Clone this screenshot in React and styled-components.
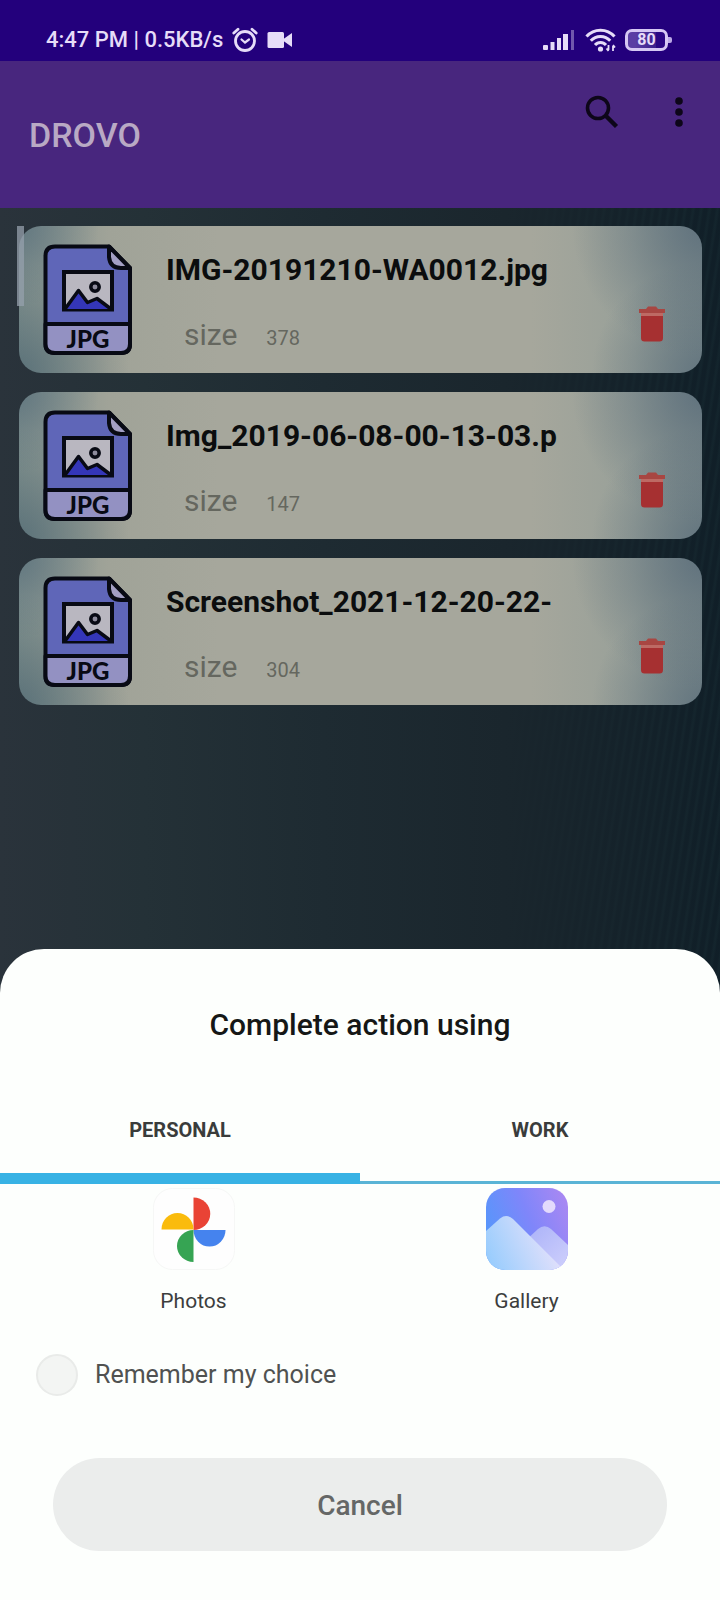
import React, { useState } from "react";
import styled, { createGlobalStyle } from "styled-components";

const GlobalStyle = createGlobalStyle`
  *, *::before, *::after { box-sizing: border-box; }
  body { margin: 0; font-family: Roboto, "Liberation Sans", sans-serif; }
  button { margin: 0; padding: 0; border: 0; background: none; font-family: inherit; cursor: pointer; }
`;

const Screen = styled.div`
  min-height: 100vh;
  display: flex;
  flex-direction: column;
  background:
    linear-gradient(90deg, #2a333b 0%, #243137 20%, #1e2b32 45%, #1a262d 70%, rgba(19, 34, 43, 0.6) 100%),
    repeating-linear-gradient(99deg, #0c1a23 0 3px, #14282f 5px 6px, #0c1a23 8px);
`;

const StatusBar = styled.div`
  display: flex;
  justify-content: space-between;
  align-items: center;
  height: 61px;
  padding: 19px 52px 0 46px;
  background: #23007c;
  color: #e6dcf8;
`;

const StatusGroup = styled.div`
  display: flex;
  align-items: center;
  gap: 9px;
`;

const Clock = styled.span`
  font-size: 22px;
  font-weight: 500;
  line-height: 28px;
  white-space: pre;
`;

const Battery = styled.span`
  position: relative;
  display: flex;
  align-items: center;
  justify-content: center;
  width: 43px;
  height: 22px;
  border: 3px solid #d6c8f4;
  border-radius: 7px;
  background: linear-gradient(90deg, #5a3ea4 20%, #3b1f8c 75%, #2a0784 75%);
  font-size: 16px;
  font-weight: 700;
  line-height: 16px;

  &::after {
    content: "";
    position: absolute;
    right: -7px;
    top: 5px;
    width: 4px;
    height: 6px;
    border-radius: 0 2px 2px 0;
    background: #bba9e6;
  }
`;

const AppBar = styled.header`
  display: flex;
  align-items: center;
  justify-content: space-between;
  height: 147px;
  padding: 0 29px;
  background: #48267e;
`;

const AppTitle = styled.h1`
  margin: 0;
  color: #b9a9c4;
  font-size: 34px;
  font-weight: 500;
  line-height: 40px;
`;

const Actions = styled.div`
  display: flex;
  align-items: center;
  align-self: flex-start;
  gap: 48px;
  height: 102px;
`;

const IconButton = styled.button`
  display: flex;
  color: ${(p) => p.$color};
`;

const FileList = styled.ul`
  position: relative;
  flex: 1;
  display: flex;
  flex-direction: column;
  gap: 19px;
  margin: 0;
  padding: 18px 18px 60px 19px;
  list-style: none;
`;

const ScrollThumb = styled.li`
  position: absolute;
  left: 17px;
  top: 18px;
  width: 7px;
  height: 80px;
  background: rgba(150, 160, 172, 0.75);
`;

const Card = styled.li`
  display: flex;
  height: 147px;
  padding: 18px 37px 0 24px;
  border-radius: 22px;
  background:
    radial-gradient(circle at 0% 0%, rgba(84, 108, 122, 0.7), transparent 80px),
    radial-gradient(circle at 0% 100%, rgba(74, 100, 112, 0.7), transparent 110px),
    radial-gradient(circle at 100% 0%, rgba(84, 104, 120, 0.75), transparent 130px),
    radial-gradient(circle at 100% 100%, rgba(88, 108, 122, 0.75), transparent 110px),
    linear-gradient(90deg, #84938f 0, #a0a398 90px, #a6a79c 200px, #a6a79c 75%, #98a099 90%, #86928f 100%);
`;

const FileInfo = styled.div`
  flex: 1;
  min-width: 0;
  display: flex;
  flex-direction: column;
  gap: 25px;
  padding: 6px 0 0 33px;
`;

const FileName = styled.span`
  overflow: hidden;
  color: #0b0d0e;
  font-size: 30px;
  font-weight: 700;
  line-height: 40px;
  white-space: nowrap;
`;

const SizeRow = styled.div`
  display: flex;
  align-items: baseline;
  gap: 29px;
  padding-left: 18px;
  color: #65675f;
  line-height: 40px;
`;

const SizeLabel = styled.span`
  font-size: 30px;
`;

const SizeValue = styled.span`
  font-size: 20px;
`;

const DeleteButton = styled(IconButton)`
  align-self: flex-end;
  margin-bottom: 31px;
`;

const Sheet = styled.section`
  display: flex;
  flex-direction: column;
  padding: 56px 0 49px;
  border-radius: 44px 44px 0 0;
  background: #fdfffd;
`;

const SheetTitle = styled.h2`
  margin: 0 0 31px;
  color: #151716;
  font-size: 30px;
  font-weight: 500;
  line-height: 40px;
  text-align: center;
`;

const Tabs = styled.div`
  display: flex;
`;

const Tab = styled.button`
  flex: 1;
  height: 108px;
  color: #3a3c3b;
  font-size: 20px;
  font-weight: 700;
  line-height: 28px;
  box-shadow: inset 0 ${(p) => (p.$active ? "-11px #38b2e4" : "-3px #5ab4d6")};
`;

const AppGrid = styled.div`
  display: grid;
  grid-template-columns: 1fr 1fr;
  padding: 4px 27px 0;
`;

const AppChoice = styled.button`
  display: flex;
  flex-direction: column;
  align-items: center;
  gap: 17px;
  color: #3c3e3d;
  font-size: 21px;
  line-height: 28px;
`;

const Remember = styled.label`
  display: flex;
  align-items: center;
  gap: 17px;
  margin: 39px 36px 0;
  color: #505251;
  font-size: 25px;
  line-height: 40px;
`;

const RoundCheck = styled.input`
  appearance: none;
  width: 42px;
  height: 42px;
  margin: 0;
  border: 2px solid #e9ebe9;
  border-radius: 50%;
  background: #f3f5f3;

  &:checked { background: #38b2e4; }
`;

const CancelButton = styled.button`
  height: 93px;
  margin: 62px 53px 0;
  padding-top: 3px;
  border-radius: 47px;
  background: #ebedec;
  color: #656766;
  font-size: 28px;
  font-weight: 500;
  line-height: 40px;
`;

const AlarmIcon = () => (
  <svg width="26" height="26" viewBox="0 0 26 26" fill="none" stroke="currentColor" strokeWidth="2.8" strokeLinecap="round">
    <circle cx="13" cy="14" r="9.5" />
    <path d="M1.8 6 6 2.2M24.2 6 20 2.2" />
    <path d="M9.5 12.5 13 15.5 17 12.5" strokeWidth="2.2" />
  </svg>
);

const VideoIcon = () => (
  <svg width="26" height="18" viewBox="0 0 26 18" fill="currentColor">
    <rect x="0.5" y="1" width="16.5" height="16" rx="1.5" />
    <path d="M15 9 25 2v14z" />
  </svg>
);

const SignalIcon = () => (
  <svg width="33" height="22" viewBox="0 0 33 22" fill="currentColor">
    <rect x="0" y="16" width="5" height="5" rx="1" />
    <rect x="7.5" y="13" width="4" height="8" />
    <rect x="14" y="9" width="4" height="12" />
    <rect x="20" y="5" width="5" height="16" />
    <rect x="28" y="1" width="3" height="20" opacity="0.4" />
  </svg>
);

const WifiIcon = () => (
  <svg width="31" height="26" viewBox="0 0 31 26" fill="none" stroke="currentColor" strokeWidth="3">
    <path d="M1.5 9.5C9 1 22 1 29.5 9.5" />
    <path d="M5.8 13.8C11 8 20 8 25.2 13.8" />
    <path d="M10 18C13 14.5 18 14.5 21 18" />
    <circle cx="15.5" cy="22" r="2.6" fill="currentColor" stroke="none" />
    <path d="M23.5 18v5M21.5 21.5l2 2.5M28 24v-5M30 20.5l-2-2.5" strokeWidth="1.8" />
  </svg>
);

const SearchIcon = () => (
  <svg width="34" height="34" viewBox="0 0 34 34" fill="none" stroke="currentColor" strokeWidth="3.6">
    <circle cx="13" cy="13" r="10.5" />
    <path d="M20.5 20.5 31.5 31.5" strokeWidth="4.4" />
  </svg>
);

const MoreIcon = () => (
  <svg width="24" height="34" viewBox="0 0 24 34" fill="currentColor">
    <circle cx="12" cy="6" r="3.8" />
    <circle cx="12" cy="17" r="3.8" />
    <circle cx="12" cy="28" r="3.8" />
  </svg>
);

const TrashIcon = () => (
  <svg width="26" height="36" viewBox="0 0 26 36">
    <path d="M0 3H7L9 0.5H17L19 3H26V7H0Z" fill="#a84642" />
    <path d="M2 7H24V10H2Z" fill="#bd6a64" />
    <path d="M2 10H24V32Q24 35.5 20.5 35.5H5.5Q2 35.5 2 32Z" fill="#a63031" />
  </svg>
);

const JpgIcon = () => (
  <svg width="90" height="112" viewBox="0 0 90 112" stroke="#080a14" strokeWidth="4" strokeLinejoin="round">
    <path d="M12 2.5H66L87 24V100Q87 109 78 109H12Q2.5 109 2.5 100V12Q2.5 2.5 12 2.5Z" fill="#5f66b8" />
    <path d="M2.5 80H87V100Q87 109 78 109H12Q2.5 109 2.5 100Z" fill="#9391c2" />
    <path d="M66 2.5V13Q67 24 78 24H87Z" fill="#a39fc4" />
    <rect x="21" y="28" width="48" height="37.5" fill="#b9b7c0" strokeLinejoin="miter" />
    <path d="M22 65 35.5 46.5 44.5 58.5 54 54.5 68 65Z" fill="#3436b8" stroke="none" />
    <path d="M22 65 35.5 46.5 44.5 58.5 54 54.5 68 65" fill="none" strokeWidth="3.5" />
    <circle cx="52" cy="43" r="4.2" fill="#8d8b9c" strokeWidth="3.5" />
    <text x="45" y="103.5" textAnchor="middle" fontFamily="Lato, sans-serif" fontWeight="900" fontSize="24" stroke="none" fill="#080a14">JPG</text>
  </svg>
);

const PhotosIcon = () => (
  <svg width="82" height="82" viewBox="0 0 82 82">
    <rect x="0.5" y="0.5" width="81" height="81" rx="19" fill="#fefefe" stroke="#f6f7f6" />
    <path d="M40.5 9.5A16.5 16 0 0 1 40.5 42Z" fill="#e94335" />
    <path d="M8.5 41.5A16 16.5 0 0 1 40.5 41.5Z" fill="#fabb0c" />
    <path d="M40.5 42A16 16.5 0 0 0 72.5 42Z" fill="#4583ee" />
    <path d="M40.5 42A16.5 16 0 0 0 40.5 74Z" fill="#36a453" />
  </svg>
);

const GalleryIcon = () => (
  <svg width="82" height="82" viewBox="0 0 82 82">
    <defs>
      <linearGradient id="sky" x1="0" y1="0.5" x2="1" y2="0.1">
        <stop offset="0" stopColor="#5796fb" />
        <stop offset="0.5" stopColor="#7f86fa" />
        <stop offset="1" stopColor="#ab88f2" />
      </linearGradient>
      <linearGradient id="near" x1="0" y1="0.8" x2="0.9" y2="0.5">
        <stop offset="0" stopColor="#96ccfd" />
        <stop offset="1" stopColor="#e2e0fb" />
      </linearGradient>
      <linearGradient id="far" x1="0" y1="0" x2="1" y2="1">
        <stop offset="0" stopColor="#a9b1f8" />
        <stop offset="1" stopColor="#cfd0fc" />
      </linearGradient>
      <clipPath id="tile"><rect width="82" height="82" rx="19" /></clipPath>
    </defs>
    <g clipPath="url(#tile)">
      <rect width="82" height="82" fill="url(#sky)" />
      <path d="M38 54 52 41Q58.5 35.5 65 41L82 57V82H38Z" fill="url(#far)" />
      <path d="M0 43 14 30.5Q20.5 25.5 27 31L74 78V82H0Z" fill="url(#near)" />
      <circle cx="63" cy="18.5" r="6.5" fill="#e3dafc" />
    </g>
  </svg>
);

const files = [
  { name: "IMG-20191210-WA0012.jpg", size: 378 },
  { name: "Img_2019-06-08-00-13-03.p", size: 147 },
  { name: "Screenshot_2021-12-20-22-", size: 304 },
];

const tabs = ["PERSONAL", "WORK"];

function FileCard({ file }) {
  return (
    <Card>
      <JpgIcon />
      <FileInfo>
        <FileName>{file.name}</FileName>
        <SizeRow>
          <SizeLabel>size</SizeLabel>
          <SizeValue>{file.size}</SizeValue>
        </SizeRow>
      </FileInfo>
      <DeleteButton aria-label={`Delete ${file.name}`}><TrashIcon /></DeleteButton>
    </Card>
  );
}

export default function App() {
  const [tab, setTab] = useState("PERSONAL");
  return (
    <Screen>
      <GlobalStyle />
      <StatusBar>
        <StatusGroup>
          <Clock>4:47 PM | 0.5KB/s</Clock>
          <AlarmIcon />
          <VideoIcon />
        </StatusGroup>
        <StatusGroup>
          <SignalIcon />
          <WifiIcon />
          <Battery>80</Battery>
        </StatusGroup>
      </StatusBar>
      <AppBar>
        <AppTitle>DROVO</AppTitle>
        <Actions>
          <IconButton $color="#0d0619" aria-label="Search"><SearchIcon /></IconButton>
          <IconButton $color="#0d0619" aria-label="More options"><MoreIcon /></IconButton>
        </Actions>
      </AppBar>
      <FileList>
        {files.map((file) => <FileCard key={file.name} file={file} />)}
        <ScrollThumb aria-hidden="true" />
      </FileList>
      <Sheet>
        <SheetTitle>Complete action using</SheetTitle>
        <Tabs role="tablist">
          {tabs.map((name) => (
            <Tab key={name} role="tab" aria-selected={tab === name} $active={tab === name} onClick={() => setTab(name)}>
              {name}
            </Tab>
          ))}
        </Tabs>
        <AppGrid>
          <AppChoice><PhotosIcon />Photos</AppChoice>
          <AppChoice><GalleryIcon />Gallery</AppChoice>
        </AppGrid>
        <Remember>
          <RoundCheck type="checkbox" />
          Remember my choice
        </Remember>
        <CancelButton>Cancel</CancelButton>
      </Sheet>
    </Screen>
  );
}
